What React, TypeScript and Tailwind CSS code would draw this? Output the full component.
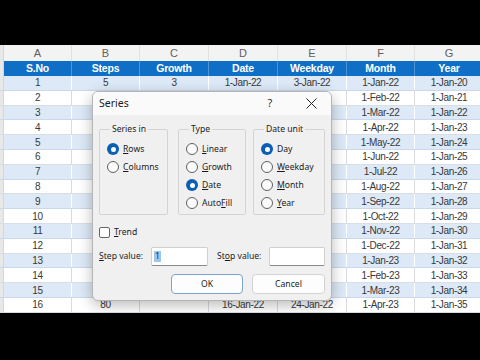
import type { ReactNode } from "react";

const letters = ["A", "B", "C", "D", "E", "F", "G"];
const heads = ["S.No", "Steps", "Growth", "Date", "Weekday", "Month", "Year"];
const widths = ["w-[68px]", "w-[68px]", "w-[69px]", "w-[69px]", "w-[69px]", "w-[68px]", "w-[69px]"];

const months = ["Jan", "Feb", "Mar", "Apr", "May", "Jun", "Jul", "Aug", "Sep", "Oct", "Nov", "Dec"];
const weekdays = [3, 4, 5, 6, 7, 10, 11, 12, 13, 14, 17, 18, 19, 20, 21, 24];

// rows 2-15 of columns B-E sit under the dialog, so they are left blank
const rows = Array.from({ length: 16 }, (_, k) => {
  const n = k + 1;
  const shown = n === 1 || n === 16;
  return [
    String(n),
    shown ? String(n * 5) : "",
    n === 1 ? "3" : "",
    shown ? `${n}-Jan-22` : "",
    shown ? `${weekdays[k]}-Jan-22` : "",
    `1-${months[k % 12]}-${22 + Math.floor(k / 12)}`,
    `1-Jan-${20 + k}`,
  ];
});

const Sheet = () => (
  <div className="flex flex-col font-['Liberation_Sans',Arial,sans-serif]">
    <div className="flex h-[16px] bg-[#f3f3f3]">
      <div className="w-[4px] shrink-0 border-r border-[#d6d6d6] bg-[#e8e8e8]" />
      {letters.map((l, i) => (
        <div
          key={l}
          className={`${widths[i]} flex shrink-0 items-center justify-center border-r border-[#e2e2e2] text-[11px] text-[#606060]`}
        >
          {l}
        </div>
      ))}
    </div>
    <div className="flex h-[15px] bg-[#0f6fc6]">
      <div className="w-[4px] shrink-0 border-r border-[#d6d6d6] bg-[#e8e8e8]" />
      {heads.map((h, i) => (
        <div
          key={h}
          className={`${widths[i]} flex shrink-0 items-center justify-center border-r border-[#4d94d6] text-[10.5px] font-bold tracking-[-0.2px] text-white`}
        >
          {h}
        </div>
      ))}
    </div>
    {rows.map((r, k) => {
      const band = k % 2 === 0;
      return (
        <div
          key={k}
          className={`flex h-[14.8px] border-b ${band ? "border-[#c9d8ea] bg-[#dde9f7]" : "border-[#d9dee5] bg-white"}`}
        >
          <div className="w-[4px] shrink-0 border-r border-[#d6d6d6] bg-[#e8e8e8]" />
          {r.map((v, i) => (
            <div
              key={i}
              className={`${widths[i]} flex shrink-0 items-center justify-center border-r ${band ? "border-white" : "border-[#dadada]"} text-[10px] tracking-[-0.35px] text-[#383838]`}
            >
              {v}
            </div>
          ))}
        </div>
      );
    })}
  </div>
);

const Radio = ({ on }: { on?: boolean }) =>
  on ? (
    <span className="flex h-[12px] w-[12px] shrink-0 items-center justify-center rounded-full bg-[#0a5fb4]">
      <span className="h-[5px] w-[5px] rounded-full bg-white" />
    </span>
  ) : (
    <span className="h-[12px] w-[12px] shrink-0 rounded-full border border-[#5f5f5f] bg-[#fbfbfb]" />
  );

const Option = ({ on, children }: { on?: boolean; children: ReactNode }) => (
  <div className="flex h-[18px] items-center gap-[4px] whitespace-nowrap">
    <Radio on={on} />
    <span>{children}</span>
  </div>
);

const Group = ({ title, width, children }: { title: string; width: string; children: ReactNode }) => (
  <fieldset className={`${width} shrink-0 rounded-[2px] border border-[#d4d4d4] pb-[2px] pl-[7px] pt-[5px]`}>
    <legend className="ml-[3px] px-[2px] leading-[12px]">{title}</legend>
    {children}
  </fieldset>
);

const SeriesDialog = () => (
  <div className="absolute left-[92px] top-[91px] flex w-[240px] flex-col overflow-hidden rounded-[6px] border border-[#b5b5b5] bg-[#f0f0f0] font-['Noto_Sans','Open_Sans',sans-serif] text-[8.6px] text-[#1b1b1b] shadow-[0_4px_14px_rgba(0,0,0,0.28)]">
    <div className="flex h-[23px] items-center bg-[#fafafa] pl-[6px] pr-[10px]">
      <span className="text-[10.5px]">Series</span>
      <span className="ml-auto flex w-[20px] justify-center text-[11px] text-[#333]">?</span>
      <span className="ml-[21px] flex w-[20px] justify-center">
        <svg width="11" height="11" viewBox="0 0 11 11" fill="none" stroke="#222" strokeWidth="1">
          <path d="M0.5 0.5L10.5 10.5M10.5 0.5L0.5 10.5" />
        </svg>
      </span>
    </div>
    <div className="flex flex-col px-[6px] pb-[6px] pt-[8px]">
      <div className="flex">
        <Group title="Series in" width="w-[69px]">
          <Option on>
            <u>R</u>ows
          </Option>
          <Option>
            <u>C</u>olumns
          </Option>
          <div className="h-[36px]" />
        </Group>
        <div className="ml-[10px]">
          <Group title="Type" width="w-[68px]">
            <Option>
              <u>L</u>inear
            </Option>
            <Option>
              <u>G</u>rowth
            </Option>
            <Option on>
              <u>D</u>ate
            </Option>
            <Option>
              Auto<u>F</u>ill
            </Option>
          </Group>
        </div>
        <div className="ml-[7px]">
          <Group title="Date unit" width="w-[72px]">
            <Option on>Day</Option>
            <Option>
              <u>W</u>eekday
            </Option>
            <Option>
              <u>M</u>onth
            </Option>
            <Option>
              <u>Y</u>ear
            </Option>
          </Group>
        </div>
      </div>
      <div className="mt-[10px] flex h-[14px] items-center gap-[4px]">
        <span className="h-[11px] w-[11px] rounded-[2px] border border-[#666] bg-white" />
        <span>
          <u>T</u>rend
        </span>
      </div>
      <div className="mt-[8px] flex h-[19px] items-center">
        <span className="w-[52px] whitespace-nowrap">
          <u>S</u>tep value:
        </span>
        <div className="flex h-[19px] w-[57px] items-center rounded-[2px] border border-[#cfcfcf] border-b-[#8a8a8a] bg-white pl-[2px]">
          <span className="bg-[#9dc6ee] px-[1px] leading-[11px] text-[#12325e]">1</span>
        </div>
        <span className="ml-[9px] w-[52px] whitespace-nowrap">
          St<u>o</u>p value:
        </span>
        <div className="h-[19px] w-[56px] rounded-[2px] border border-[#cfcfcf] border-b-[#8a8a8a] bg-white" />
      </div>
      <div className="mt-[8px] flex justify-end gap-[9px]">
        <button className="h-[20px] w-[72px] rounded-[4px] border border-[#7fa3cf] bg-[#fdfdfd] text-[8.6px] text-[#1b1b1b]">
          OK
        </button>
        <button className="h-[20px] w-[73px] rounded-[4px] border border-[#d3d3d3] bg-[#fdfdfd] text-[8.6px] text-[#1b1b1b]">
          Cancel
        </button>
      </div>
    </div>
  </div>
);

export default function App() {
  return (
    <div className="relative flex h-[360px] w-[480px] flex-col overflow-hidden bg-black">
      <div className="h-[45px] shrink-0" />
      <Sheet />
      <SeriesDialog />
    </div>
  );
}
